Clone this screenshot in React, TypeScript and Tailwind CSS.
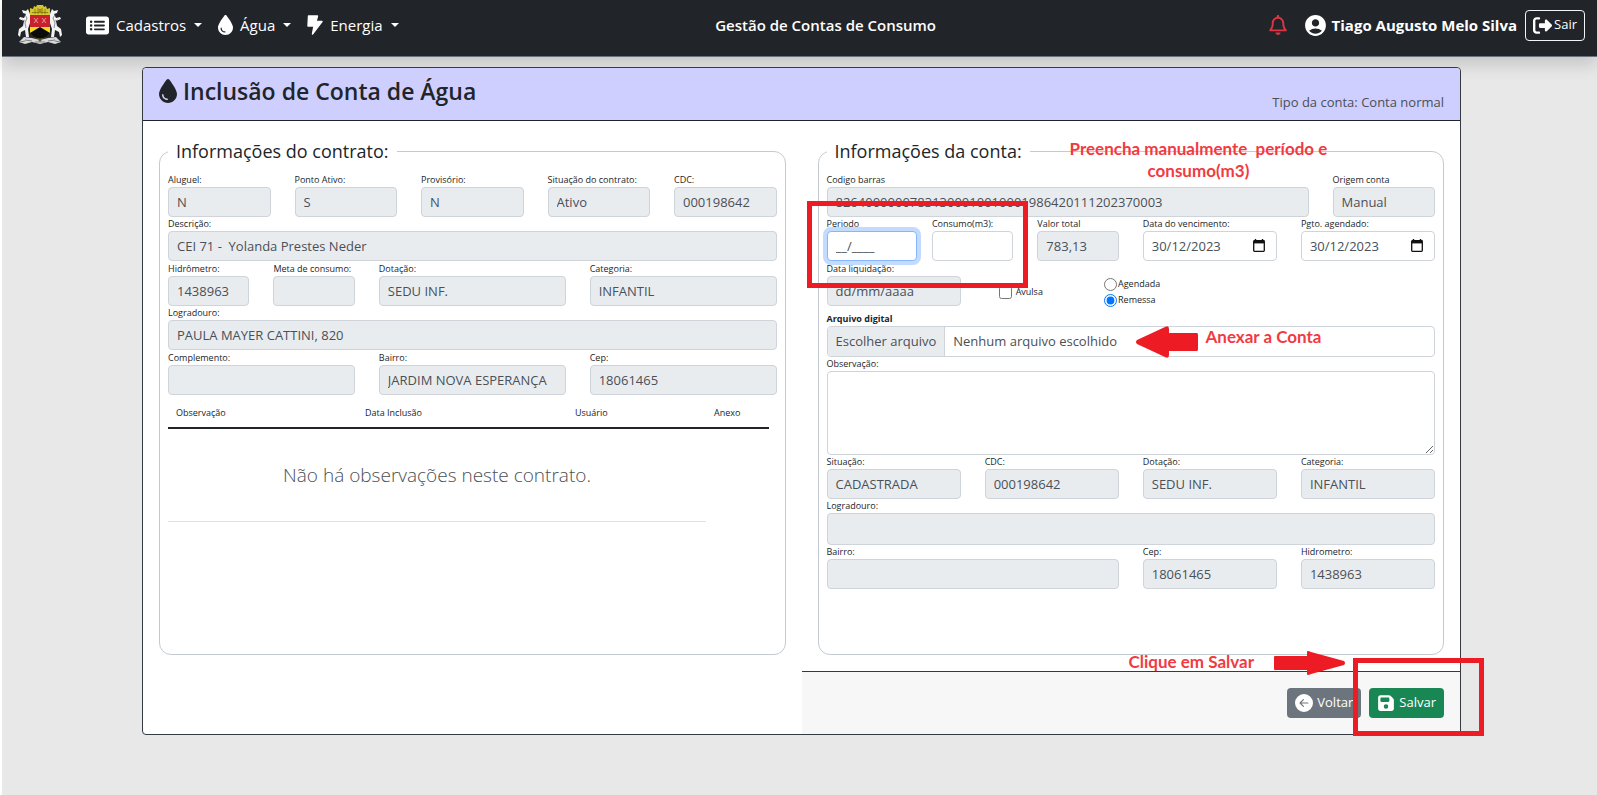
import React, { useId, useState } from 'react';
import clsx from 'clsx';
import { FaRectangleList, FaDroplet, FaRegBell, FaRightFromBracket, FaFloppyDisk } from 'react-icons/fa6';
import { BsArrowLeftCircleFill } from 'react-icons/bs';
import { MdAccountCircle } from 'react-icons/md';

interface FieldProps {
    label: string;
    value?: string;
    className?: string;
    inputClassName?: string;
    editable?: boolean;
    calendar?: boolean;
    focused?: boolean;
}

const labelClass = 'block h-3.5 text-[9px] leading-3.5 whitespace-nowrap';

const CalendarIcon = () => (
    <svg viewBox="0 0 12 13" className="w-3 h-[13px]" aria-hidden="true">
        <path d="M2.5 0v2M9.5 0v2" stroke="#111" strokeWidth="1.4" />
        <rect x="0.7" y="1.7" width="10.6" height="10.6" rx="0.8" fill="none" stroke="#111" strokeWidth="1.3" />
        <path d="M0.7 1.4h10.6v3H0.7z" fill="#111" />
    </svg>
);

const BoltIcon = () => (
    <svg viewBox="0 0 16 20" className="h-5 w-4" aria-hidden="true">
        <path
            d="M1.5 1h9L9 6.500h6L5.500 19l1.500-8H1z"
            fill="currentColor"
            stroke="currentColor"
            strokeWidth="1.4"
            strokeLinejoin="round"
        />
    </svg>
);

const Field = ({ label, value = '', className, inputClassName, editable, calendar, focused }: FieldProps) => {
    const id = useId();
    const [text, setText] = useState<string>(value);

    return (
        <div className={className}>
            <label htmlFor={id} className={labelClass}>{label}</label>
            <div className="relative">
                <input
                    id={id}
                    type="text"
                    value={text}
                    readOnly={!editable}
                    onChange={e => setText(e.target.value)}
                    className={clsx(
                        'block rounded border px-2 text-[13px] text-[#495057] outline-none',
                        inputClassName || 'h-[30px] w-full',
                        editable ? 'bg-white' : 'bg-[#e9ecef]',
                        focused ? 'border-[#86b7fe] ring-4 ring-[#c2dbfe]' : 'border-[#ced4da]'
                    )}
                />
                {calendar && (
                    <button type="button" aria-label="Abrir calendário" className="absolute right-3 top-2">
                        <CalendarIcon />
                    </button>
                )}
            </div>
        </div>
    );
};

const NavItem = ({ icon, text }: { icon: React.ReactNode; text: string }) => (
    <button type="button" className="flex items-center text-[15px] text-white">
        {icon}
        <span className="ml-[7px]">{text}</span>
        <span className="ml-2 mr-4 border-x-4 border-t-4 border-x-transparent border-t-white" />
    </button>
);

const Crest = () => (
    <svg viewBox="0 0 44 40" className="w-11 h-10" role="img" aria-label="Brasão">
        <path d="M12 10V3l3 1 1-3 2 1 1-2 2-0h2l2 0 1 2 2-1 1 3 3-1v7z" fill="#d6c52c" />
        <path d="M14 7.500h16M17 4v5M20 3v6M24 3v6M27 4v5" stroke="#7d7212" strokeWidth="0.8" />
        <rect x="20.500" y="4" width="3" height="3" fill="#a88d12" />
        <path d="M12 10h20v12H12z" fill="#c9202b" />
        <path d="M12 22h20v4c0 4-4 7-10 8-6-1-10-4-10-8z" fill="#f2dc1d" />
        <path d="M22 22l10 6c-2 4-6 5-10 6-4-1-8-2-10-6z" fill="#0b0b0b" />
        <path d="M16 13l4 5M20 13l-4 5M24 13l4 5M28 13l-4 5" stroke="#e3a5a5" strokeWidth="0.9" />
        <path d="M10 4L8 6 4 5 5 8l3 1-2 4-4-1-1 2 5 2-1 5-4 3-1 6 2 2 1-5 4-2 1 7h3l-1-8 2-6V9L10 4z" fill="#f4f4f4" />
        <path d="M34 4l2 2 4-1-1 3-3 1 2 4 4-1 1 2-5 2 1 5 4 3 1 6-2 2-1-5-4-2-1 7h-3l1-8-2-6V9l2-5z" fill="#f4f4f4" />
        <path d="M7 10l2 3-2 5 1 5M37 10l-2 3 2 5-1 5M4 15l3 1M40 15l-3 1" fill="none" stroke="#777" strokeWidth="0.8" />
        <path d="M1 37l5-5 8 1 8 2 8-2 8-1 5 5-6 2-7-2-8 2-8-2-7 2z" fill="#d8d8d8" />
        <path d="M7 35l7 1M30 36l7-1M17 37h10M2 37l5-1M37 36l5 1" stroke="#777" strokeWidth="0.9" />
        <circle cx="22" cy="35" r="1.500" fill="#555" />
    </svg>
);

const Navbar = () => (
    <header className="relative flex h-[57px] items-center border-b border-gray-500 bg-[#212529] pb-1.5 pl-4 pr-3 text-white shadow-[0_8px_16px_rgba(0,0,0,0.15)]">
        <a href="#inicio" className="mr-6"><Crest /></a>
        <nav className="flex items-center">
            <NavItem icon={<FaRectangleList className="size-[23px]" />} text="Cadastros" />
            <NavItem icon={<FaDroplet className="h-5 w-[15px]" />} text="Água" />
            <NavItem icon={<BoltIcon />} text="Energia" />
        </nav>
        <p className="mx-auto text-[15px] font-semibold">Gestão de Contas de Consumo</p>
        <button type="button" aria-label="Notificações" className="mr-4 pl-8">
            <FaRegBell className="h-5 w-[18px] text-[#dc3545]" />
        </button>
        <div className="mr-2 flex items-center gap-1">
            <MdAccountCircle className="size-[25px]" />
            <span className="text-[15px] font-bold">Tiago Augusto Melo Silva</span>
        </div>
        <button type="button" className="flex h-[31px] items-center gap-0.5 rounded border border-gray-100 px-[7px] text-[13px]">
            <FaRightFromBracket className="size-[19px]" />
            Sair
        </button>
    </header>
);

const Fieldset = ({ legend, children }: { legend: string; children: React.ReactNode }) => (
    <fieldset className="min-h-[518px] min-w-0 rounded-xl border border-[#c4cad0] px-2 pt-2">
        <legend className="h-7 px-2 text-[18px] leading-7">{legend}</legend>
        {children}
    </fieldset>
);

const Row = ({ children }: { children: React.ReactNode }) => (
    <div className="grid grid-cols-12 gap-x-6">{children}</div>
);

const ContractInfo = () => (
    <Fieldset legend="Informações do contrato:">
        <div className="grid grid-cols-5 gap-x-6">
            <Field label="Aluguel:" value="N" />
            <Field label="Ponto Ativo:" value="S" />
            <Field label="Provisório:" value="N" />
            <Field label="Situação do contrato:" value="Ativo" />
            <Field label="CDC:" value="000198642" />
        </div>
        <Field label="Descrição:" value="CEI 71 -  Yolanda Prestes Neder" className="pb-px" />
        <Row>
            <Field label="Hidrômetro:" value="1438963" className="col-span-2" />
            <Field label="Meta de consumo:" className="col-span-2" />
            <Field label="Dotação:" value="SEDU INF." className="col-span-4" />
            <Field label="Categoria:" value="INFANTIL" className="col-span-4" />
        </Row>
        <Field label="Logradouro:" value="PAULA MAYER CATTINI, 820" className="pb-px" />
        <Row>
            <Field label="Complemento:" className="col-span-4" />
            <Field label="Bairro:" value="JARDIM NOVA ESPERANÇA" className="col-span-4" />
            <Field label="Cep:" value="18061465" className="col-span-4" />
        </Row>
        <div className="pr-2">
            <table className="w-full table-fixed">
                <thead>
                    <tr className="h-[33px] border-b-2 border-[#212529] text-left text-[9px]">
                        <th className="w-[189px] px-2 pt-1 font-normal">Observação</th>
                        <th className="w-[210px] px-2 pt-1 font-normal">Data Inclusão</th>
                        <th className="w-[139px] px-2 pt-1 font-normal">Usuário</th>
                        <th className="px-2 pt-1 font-normal">Anexo</th>
                    </tr>
                </thead>
                <tbody>
                    <tr>
                        <td colSpan={3} className="h-[93px] border-b border-[#dee2e6] text-center text-[19px] font-light text-[#495057]">
                            Não há observações neste contrato.
                        </td>
                    </tr>
                </tbody>
            </table>
        </div>
    </Fieldset>
);

const BillInfo = () => {
    const [payment, setPayment] = useState<'agendada' | 'remessa'>('remessa');
    const [single, setSingle] = useState<boolean>(false);

    return (
        <Fieldset legend="Informações da conta:">
            <div className="grid grid-cols-5 gap-x-6">
                <Field label="Codigo barras" value="82640000007831300010010001986420111202370003" className="col-span-4" />
                <Field label="Origem conta" value="Manual" />
            </div>
            <div className="pb-px">
                <Row>
                    <Field label="Periodo" value="__/____" editable focused className="col-span-2" inputClassName="h-[30px] w-[90px]" />
                    <Field label="Consumo(m3):" editable className="col-span-2" />
                    <Field label="Valor total" value="783,13" className="col-span-2" />
                    <Field label="Data do vencimento:" value="30/12/2023" editable calendar className="col-span-3" />
                    <Field label="Pgto. agendado:" value="30/12/2023" editable calendar className="col-span-3" />
                </Row>
            </div>
            <Row>
                <Field label="Data liquidação:" value="dd/mm/aaaa" className="col-span-3" />
                <label className="col-span-2 flex items-center gap-1 pl-3.5 pt-3.5 text-[9px]">
                    <input type="checkbox" checked={single} onChange={() => setSingle(!single)} className="size-[13px]" />
                    Avulsa
                </label>
                <div className="col-span-3 flex flex-col justify-center pl-3.5 pt-3.5 text-[9px]">
                    <label className="flex h-4 items-center gap-px">
                        <input type="radio" name="pagamento" checked={payment === 'agendada'} onChange={() => setPayment('agendada')} className="size-[13px]" />
                        Agendada
                    </label>
                    <label className="flex h-4 items-center gap-px">
                        <input type="radio" name="pagamento" checked={payment === 'remessa'} onChange={() => setPayment('remessa')} className="size-[13px]" />
                        Remessa
                    </label>
                </div>
            </Row>
            <div className="pt-1">
                <label htmlFor="arquivo" className={clsx(labelClass, 'font-bold')}>Arquivo digital</label>
                <label htmlFor="arquivo" className="flex h-[31px] items-center overflow-hidden rounded border border-[#ced4da] text-[13px] text-[#495057]">
                    <span className="flex h-full items-center border-r border-[#ced4da] bg-[#e9ecef] px-2">Escolher arquivo</span>
                    <span className="px-2">Nenhum arquivo escolhido</span>
                </label>
                <input id="arquivo" type="file" className="sr-only" />
            </div>
            <label htmlFor="observacao" className={labelClass}>Observação:</label>
            <textarea id="observacao" className="block h-[84px] w-full rounded border border-[#ced4da] px-2 py-1 text-[13px]" />
            <Row>
                <Field label="Situação:" value="CADASTRADA" className="col-span-3" />
                <Field label="CDC:" value="000198642" className="col-span-3" />
                <Field label="Dotação:" value="SEDU INF." className="col-span-3" />
                <Field label="Categoria:" value="INFANTIL" className="col-span-3" />
            </Row>
            <Field label="Logradouro:" inputClassName="h-8 w-full" />
            <Row>
                <Field label="Bairro:" className="col-span-6" />
                <Field label="Cep:" value="18061465" className="col-span-3" />
                <Field label="Hidrometro:" value="1438963" className="col-span-3" />
            </Row>
        </Fieldset>
    );
};

// red tutorial marks drawn over the form
const Marks = () => (
    <div className="pointer-events-none font-['Lato',sans-serif] text-[17px] font-bold leading-[22px] text-[#f23a42]">
        <p className="absolute left-[268px] top-[17px] whitespace-pre text-center">
            {'Preencha manualmente  período e\nconsumo(m3)'}
        </p>
        <div className="absolute left-[5px] top-20 h-[87px] w-[221px] border-5 border-[#ed1c24]" />
        <div className="absolute left-[334px] top-[205px] flex gap-2">
            <svg viewBox="0 0 62 32" className="h-8 w-[62px]" aria-hidden="true">
                <path d="M1 14L29 1q4-2 4 2v4h28q1 0 1 2v14q0 2-1 2H33v4q0 4-4 2L1 18q-2-2 0-4z" fill="#ed1c24" />
            </svg>
            <span>Anexar a Conta</span>
        </div>
        <div className="absolute left-[327px] top-[530px] flex gap-5">
            <span>Clique em Salvar</span>
            <svg viewBox="0 0 71 24" className="h-6 w-[71px]" aria-hidden="true">
                <path d="M1 5h32V1q0-2 4 0l33 9q2 2 0 4l-33 9q-4 2-4 0v-4H1q-1 0-1-1V6q0-1 1-1z" fill="#ed1c24" />
            </svg>
        </div>
        <div className="absolute -right-6 top-[537px] h-[78px] w-[131px] border-5 border-[#ed1c24]" />
    </div>
);

const App = () => {
    return (
        <div className="min-h-screen bg-white pl-0.5 font-['Open_Sans',sans-serif] text-[#212529]">
            <div className="min-h-screen bg-[#e8e8e8]">
                <Navbar />
                <main className="relative pl-1 pt-2.5">
                    <form className="mx-auto max-w-[1319px] rounded border border-[#343a40] bg-white" onSubmit={e => e.preventDefault()}>
                        <div className="flex h-[53px] justify-between rounded-t border-b border-[#212529] bg-[#cfcfff] px-4">
                            <h1 className="flex items-center gap-1.5 pb-1.5 text-[23px] font-semibold">
                                <FaDroplet className="h-6 w-[18px]" />
                                Inclusão de Conta de Água
                            </h1>
                            <p className="self-end pb-2 text-[13px] text-[#495057]">Tipo da conta: Conta normal</p>
                        </div>
                        <div className="grid grid-cols-2">
                            <div className="p-4">
                                <ContractInfo />
                            </div>
                            <div className="relative">
                                <div className="p-4">
                                    <BillInfo />
                                </div>
                                <div className="flex justify-end gap-2 rounded-br border-t border-[#343a40] bg-[#f7f7f7] p-4">
                                    <button type="button" className="flex h-[30px] items-center gap-1 rounded bg-[#6c757d] px-2 text-[13px] text-white">
                                        <BsArrowLeftCircleFill className="size-[18px]" />
                                        Voltar
                                    </button>
                                    <button type="submit" className="flex h-[30px] items-center gap-1 rounded bg-[#198754] px-2 text-[13px] text-white">
                                        <FaFloppyDisk className="size-[18px]" />
                                        Salvar
                                    </button>
                                </div>
                                <Marks />
                            </div>
                        </div>
                    </form>
                </main>
            </div>
        </div>
    );
};

export default App;
